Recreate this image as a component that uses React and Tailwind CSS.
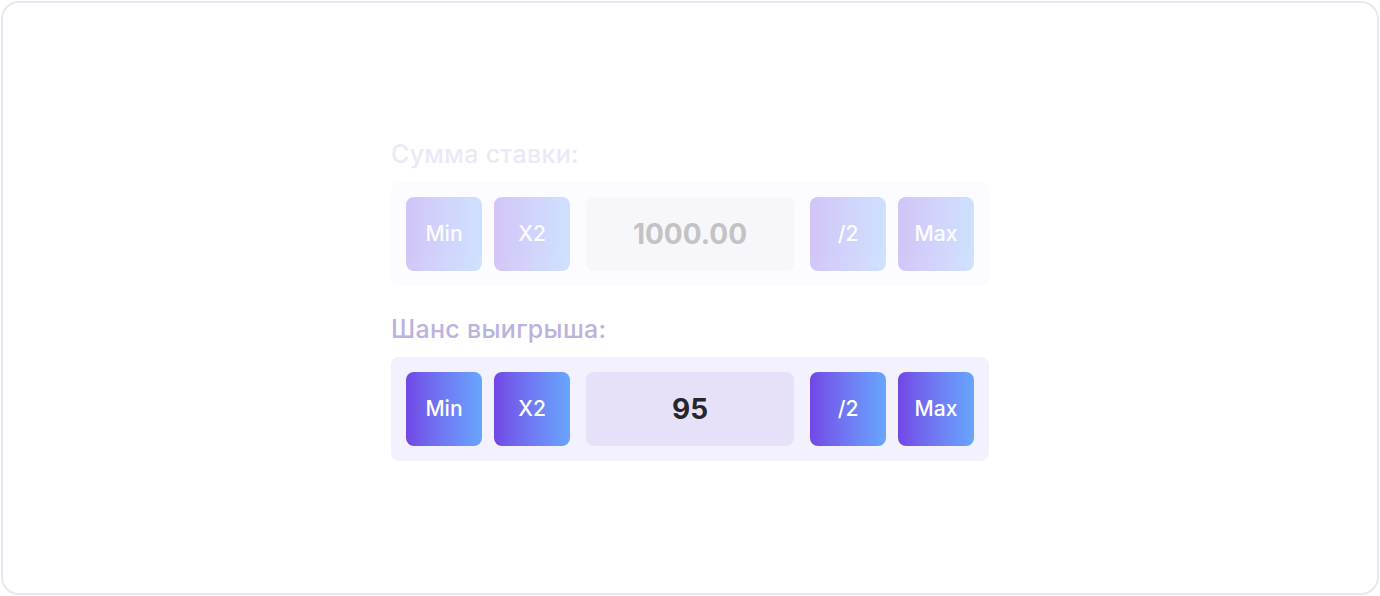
const Btn = ({ label, faded }) => (
  <button
    className={`flex h-[74px] w-[76px] items-center justify-center rounded-lg bg-gradient-to-r from-[#7147e6] to-[#66a6ff] text-[21px] font-medium text-white ${
      faded ? "opacity-30" : ""
    }`}
  >
    {label}
  </button>
);

const Row = ({ title, value, faded }) => (
  <div className="flex flex-col">
    <div
      className={`text-[25px] font-medium leading-none tracking-[0.3px] ${
        faded ? "text-[#ebe8f8]" : "text-[#bbb2de]"
      }`}
    >
      {title}
    </div>
    <div
      className={`mt-[15px] flex w-[598px] items-center rounded-lg p-[15px] ${
        faded ? "bg-[#fcfbff]" : "bg-[#f3f1fd]"
      }`}
    >
      <Btn label="Min" faded={faded} />
      <div className="ml-3">
        <Btn label="X2" faded={faded} />
      </div>
      <div
        className={`mx-4 flex h-[74px] w-[208px] items-center justify-center rounded-lg text-[28px] font-bold ${
          faded ? "bg-[#f7f6fb] text-[#c3c3c3]" : "bg-[#e6e1f8] text-[#26262b]"
        }`}
      >
        {value}
      </div>
      <Btn label="/2" faded={faded} />
      <div className="ml-3">
        <Btn label="Max" faded={faded} />
      </div>
    </div>
  </div>
);

export default function App() {
  return (
    <div
      className="h-[596px] w-[1380px] bg-white p-px"
      style={{ fontFamily: "Inter, 'Noto Sans', sans-serif" }}
    >
      <div className="flex h-full w-full flex-col items-center rounded-[18px] border-2 border-[#e8e8f5] pt-[139px]">
        <div className="flex flex-col gap-[31px]">
          <Row title="Сумма ставки:" value="1000.00" faded />
          <Row title="Шанс выигрыша:" value="95" />
        </div>
      </div>
    </div>
  );
}
